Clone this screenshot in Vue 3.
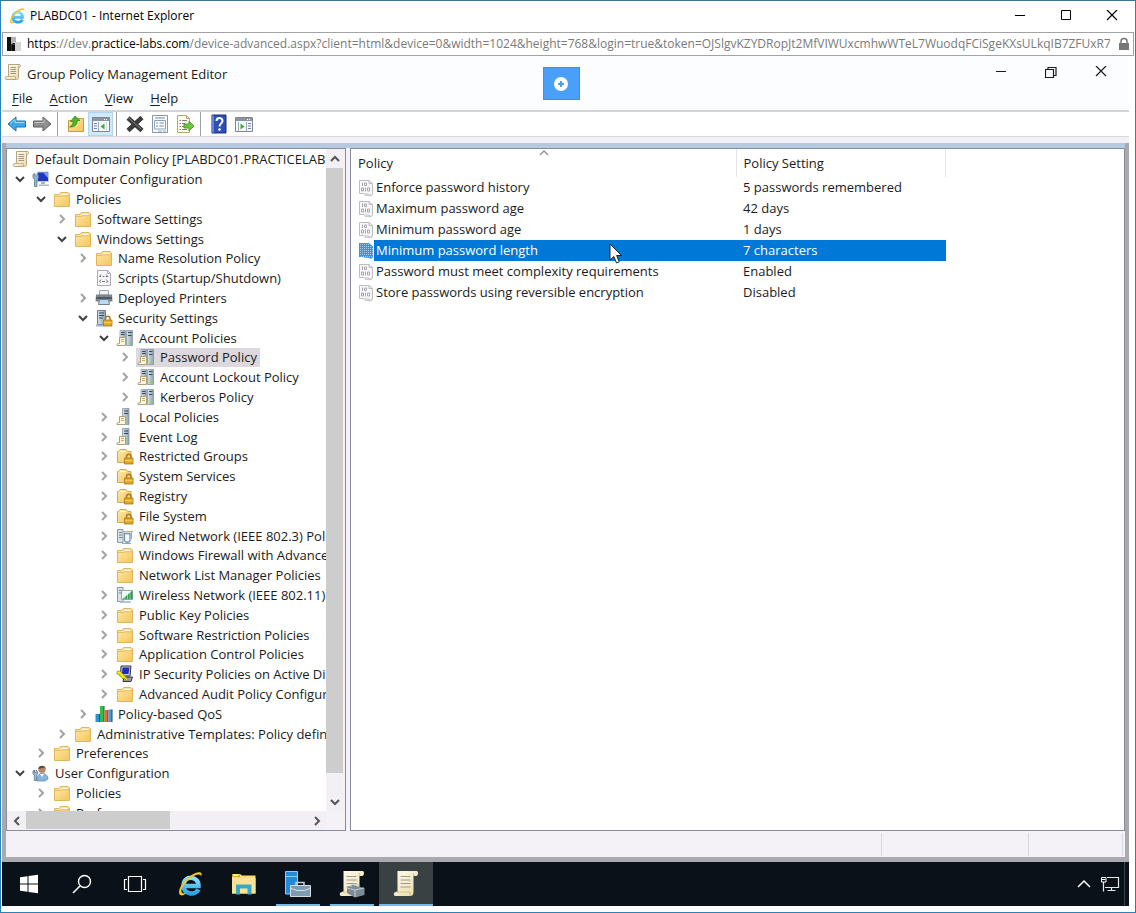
<script setup>
import { ref } from 'vue'

const tree = [
  { level: 0, arrow: '', icon: 'scroll', text: 'Default Domain Policy [PLABDC01.PRACTICELABS', root: true },
  { level: 0, arrow: 'open', icon: 'computer', text: 'Computer Configuration' },
  { level: 1, arrow: 'open', icon: 'folder', text: 'Policies' },
  { level: 2, arrow: 'closed', icon: 'folder', text: 'Software Settings' },
  { level: 2, arrow: 'open', icon: 'folder', text: 'Windows Settings' },
  { level: 3, arrow: 'closed', icon: 'folder', text: 'Name Resolution Policy' },
  { level: 3, arrow: '', icon: 'script', text: 'Scripts (Startup/Shutdown)' },
  { level: 3, arrow: 'closed', icon: 'printer', text: 'Deployed Printers' },
  { level: 3, arrow: 'open', icon: 'security', text: 'Security Settings' },
  { level: 4, arrow: 'open', icon: 'servers', text: 'Account Policies' },
  { level: 5, arrow: 'closed', icon: 'servers', text: 'Password Policy' },
  { level: 5, arrow: 'closed', icon: 'servers', text: 'Account Lockout Policy' },
  { level: 5, arrow: 'closed', icon: 'servers', text: 'Kerberos Policy' },
  { level: 4, arrow: 'closed', icon: 'server', text: 'Local Policies' },
  { level: 4, arrow: 'closed', icon: 'server', text: 'Event Log' },
  { level: 4, arrow: 'closed', icon: 'locked', text: 'Restricted Groups' },
  { level: 4, arrow: 'closed', icon: 'locked', text: 'System Services' },
  { level: 4, arrow: 'closed', icon: 'locked', text: 'Registry' },
  { level: 4, arrow: 'closed', icon: 'locked', text: 'File System' },
  { level: 4, arrow: 'closed', icon: 'wired', text: 'Wired Network (IEEE 802.3) Polic' },
  { level: 4, arrow: 'closed', icon: 'folder', text: 'Windows Firewall with Advanced' },
  { level: 4, arrow: '', icon: 'folder', text: 'Network List Manager Policies' },
  { level: 4, arrow: 'closed', icon: 'wireless', text: 'Wireless Network (IEEE 802.11) P' },
  { level: 4, arrow: 'closed', icon: 'folder', text: 'Public Key Policies' },
  { level: 4, arrow: 'closed', icon: 'folder', text: 'Software Restriction Policies' },
  { level: 4, arrow: 'closed', icon: 'folder', text: 'Application Control Policies' },
  { level: 4, arrow: 'closed', icon: 'ipsec', text: 'IP Security Policies on Active Dir' },
  { level: 4, arrow: 'closed', icon: 'folder', text: 'Advanced Audit Policy Configur' },
  { level: 3, arrow: 'closed', icon: 'qos', text: 'Policy-based QoS' },
  { level: 2, arrow: 'closed', icon: 'folder', text: 'Administrative Templates: Policy definit' },
  { level: 1, arrow: 'closed', icon: 'folder', text: 'Preferences' },
  { level: 0, arrow: 'open', icon: 'user', text: 'User Configuration' },
  { level: 1, arrow: 'closed', icon: 'folder', text: 'Policies' },
  { level: 1, arrow: 'closed', icon: 'folder', text: 'Preferences' },
]
const selectedNode = ref(10)

const policies = [
  ['Enforce password history', '5 passwords remembered'],
  ['Maximum password age', '42 days'],
  ['Minimum password age', '1 days'],
  ['Minimum password length', '7 characters'],
  ['Password must meet complexity requirements', 'Enabled'],
  ['Store passwords using reversible encryption', 'Disabled'],
]
const selectedPolicy = ref(3)

const menus = ['File', 'Action', 'View', 'Help']
const toolGroups = [
  [['back', 'Back'], ['forward', 'Forward']],
  [['up', 'Up one level'], ['panel', 'Show/Hide console tree', true]],
  [['delete', 'Delete'], ['props', 'Properties'], ['export', 'Export list']],
  [['help', 'Help'], ['action', 'Show/Hide action pane']],
]
const pinned = [['start', 'Start'], ['search', 'Search'], ['taskview', 'Task View']]
const apps = [
  { icon: 'ie', label: 'Internet Explorer' },
  { icon: 'explorer', label: 'File Explorer' },
  { icon: 'srvmgr', label: 'Server Manager', running: true },
  { icon: 'gpmc', label: 'Group Policy Management', running: true },
  { icon: 'bigscroll', label: 'Group Policy Management Editor', running: true, active: true },
]
</script>

<template>
  <div class="browser">
    <svg class="sprite" aria-hidden="true">
      <defs>
        <linearGradient id="gFolder" x1="0" y1="0" x2="1" y2="1">
          <stop offset="0" stop-color="#ffe9a6" /><stop offset="1" stop-color="#f3c55f" />
        </linearGradient>
        <linearGradient id="gServer" x1="0" y1="0" x2="1" y2="0">
          <stop offset="0" stop-color="#d6e2ea" /><stop offset="1" stop-color="#8fa2b0" />
        </linearGradient>
        <linearGradient id="gPaper" x1="0" y1="0" x2="1" y2="1">
          <stop offset="0" stop-color="#fffdf0" /><stop offset="1" stop-color="#ead9a6" />
        </linearGradient>
        <linearGradient id="gIe" x1="0" y1="0" x2="0" y2="1">
          <stop offset="0" stop-color="#8be0fb" /><stop offset="1" stop-color="#2aa4e6" />
        </linearGradient>
      </defs>
      <symbol id="i-folder" viewBox="0 0 18 18">
        <path d="M1.500 4.500H6L7.500 2.500H15L16.500 4V16.500H1.500Z" fill="url(#gFolder)" stroke="#dfb65c" />
        <path d="M8.500 4.500H14.500" stroke="#fff" stroke-width="1.500" />
        <path d="M2 6.500H7L8.500 5.800H16" fill="none" stroke="#e6bd62" />
      </symbol>
      <symbol id="i-scroll" viewBox="0 0 18 18">
        <path d="M4.500 1.500H16C17 2.500 16.500 5 14.500 4.500V14.500C14.500 16 13.500 16.500 12.500 16.500H2C1 15.500 1 13.500 2.500 13.500H4.500Z" fill="url(#gPaper)" stroke="#b3a583" />
        <path d="M14.500 4.500V2.500M2.500 13.500H11.500V16" fill="none" stroke="#c4b48a" />
        <path d="M6.500 4.500H12M6.500 6.500H12M6.500 8.500H12M6.500 10.500H12" stroke="#9c9788" />
      </symbol>
      <symbol id="i-computer" viewBox="0 0 18 18">
        <path d="M5.500 2H16.500V11.500H5.500Z" fill="#2134c4" stroke="#c0c7d8" />
        <path d="M11 2.500H16V8Z" fill="#7e98f2" />
        <path d="M9 12H13V14H9ZM7 14.500H17V16H7Z" fill="#a9b3c4" />
        <path d="M1 4.500L3 3.500V6L5 6V3.500L6.500 5V8L5 9.500V16.500H2.500V9.500L1 8Z" fill="#8fb6d4" stroke="#4a7194" stroke-width=".7" />
      </symbol>
      <symbol id="i-script" viewBox="0 0 18 18">
        <path d="M2.500 1.500H12.500L15.500 4.500V16.500H2.500Z" fill="#f8f8fa" stroke="#a9a9b2" />
        <path d="M12.500 1.500V4.500H15.500" fill="none" stroke="#a9a9b2" />
        <path d="M6 5.500L4.500 7.500H6M11 5.500L13 7.500H11M7.500 7.500H9.500M6 10.500L4.500 12.500L6 13.500M11 10.500L13 12.500L11 13.500M7 12.500H10" fill="none" stroke="#73737d" />
      </symbol>
      <symbol id="i-printer" viewBox="0 0 18 18">
        <path d="M4.500 1.500H13.500V6H4.500Z" fill="#f0f3f6" stroke="#9aa4ad" />
        <path d="M1 5.500H17L17.500 12.500H.500Z" fill="#7d858d" />
        <path d="M1 9H17" stroke="#454b52" stroke-width="1.500" />
        <path d="M4.500 10.500H13.500L14.500 15.500H3.500Z" fill="#b8d8f3" stroke="#6f8191" />
      </symbol>
      <symbol id="i-lock" viewBox="0 0 18 18">
        <path d="M10.500 11V9.500C10.500 6.500 15 6.500 15 9.500V11" fill="none" stroke="#a87d25" stroke-width="1.500" />
        <path d="M8.500 11H17V17H8.500Z" fill="#e0a526" stroke="#a87715" stroke-width=".8" />
        <path d="M9 13.500H16.500" stroke="#f3c957" stroke-width="1.500" />
      </symbol>
      <symbol id="i-security" viewBox="0 0 18 18">
        <path d="M2.500 1.500H10.500V15.500H2.500Z" fill="url(#gServer)" stroke="#6d7e8b" />
        <path d="M4 4H9M4 6.500H9M4 9H8" stroke="#32475b" />
        <path d="M1 15.500H10V17.500H1Z" fill="#9ab6cf" />
        <use href="#i-lock" />
      </symbol>
      <symbol id="i-locked" viewBox="0 0 18 18">
        <path d="M1.500 4.500H2.500L4 2.500H10L11.500 4.500H15V15.500H1.500Z" fill="url(#gFolder)" stroke="#d6a94a" />
        <path d="M4.500 4.500H9.500" stroke="#fff" />
        <use href="#i-lock" />
      </symbol>
      <symbol id="i-page" viewBox="0 0 18 18">
        <path d="M3.500 8.500H9.500V16.500H1C.500 15.500 1 14.500 3.500 14.500Z" fill="#fff9e2" stroke="#ab9f7d" />
        <path d="M5 10.500H8M5 12.500H8" stroke="#d3a84e" />
      </symbol>
      <symbol id="i-servers" viewBox="0 0 18 18">
        <path d="M4 1.500H9.500V13H4Z" fill="url(#gServer)" stroke="#8696a3" stroke-width=".7" />
        <path d="M10.500 1.500H16.500V16.500H10.500Z" fill="url(#gServer)" stroke="#7b8d9a" stroke-width=".7" />
        <path d="M5 3.500H8.500M5 5.500H8.500M12 3.500H15.500M12 6.500H15.500" stroke="#334d60" />
        <path d="M13 13H15.500V15H13Z" fill="#8bd15a" />
        <use href="#i-page" />
      </symbol>
      <symbol id="i-server" viewBox="0 0 18 18">
        <path d="M6.500 .500H13V16.500H6.500Z" fill="url(#gServer)" stroke="#7b8d9a" stroke-width=".7" />
        <path d="M8 3H12M8 5.500H12" stroke="#334d60" />
        <path d="M10.500 12.500H12V14.500H10.500Z" fill="#8bd15a" />
        <use href="#i-page" />
      </symbol>
      <symbol id="i-wired" viewBox="0 0 18 18">
        <path d="M1.500 2.500H7V15.500H1.500Z" fill="#dbe3ea" stroke="#8796a5" />
        <path d="M3 5.500H6M3 8H6M3 10.500H6" stroke="#6e8294" />
        <path d="M7 4.500H17M15.500 4.500V12" stroke="#bca973" />
        <path d="M8.500 6.500H14V13C14 16 8.500 16 8.500 13Z" fill="#fff" stroke="#6a92b8" stroke-width="1.300" />
        <path d="M6 16.500H15" stroke="#8fa9bf" />
      </symbol>
      <symbol id="i-wireless" viewBox="0 0 18 18">
        <path d="M1.500 1.500H7V15.500H1.500Z" fill="#dbe3ea" stroke="#8796a5" />
        <path d="M3 4.500H6M3 7H6" stroke="#6e8294" />
        <path d="M5.500 4.500H16.500V13.500H5.500Z" fill="#effaf0" stroke="#92a99c" />
        <path d="M6.500 13L16.500 4.500V13Z" fill="#2e9b57" />
        <path d="M9 5V13M11.500 5V13M14 5V13" stroke="#fff" stroke-width=".5" />
        <path d="M4 16H15" stroke="#9cb3c4" stroke-width="1.500" />
      </symbol>
      <symbol id="i-ipsec" viewBox="0 0 18 18">
        <path d="M5 1H15L14 11H4.500Z" fill="#c9cbd6" stroke="#33343d" />
        <path d="M6.500 2.500H13.500L12.500 9H6Z" fill="#1c2fb5" />
        <path d="M8 12H16.500L15 16.500H7Z" fill="#9b9ca6" stroke="#33343d" />
        <path d="M1 6.500L4 6L12 14.500L10.500 15.500L8 13L6.500 14L5.500 11.500L3.500 11L4 9.500L1 9Z" fill="#f7f000" stroke="#77731b" stroke-width=".6" />
      </symbol>
      <symbol id="i-qos" viewBox="0 0 18 18">
        <path d="M.500 9H4.500V17H.500Z" fill="#2694d8" /><path d="M4 9H5V17H4Z" fill="#104f86" />
        <path d="M5 1H9V17H5Z" fill="#35ba4e" /><path d="M8.500 1H9.500V17H8.500Z" fill="#16692a" />
        <path d="M9.500 5H13V17H9.500Z" fill="#e86a35" /><path d="M12.500 5H13.500V17H12.500Z" fill="#8f3317" />
        <path d="M13.500 4.500H17V17H13.500Z" fill="#4aa2dd" /><path d="M16.500 4.500H17.500V17H16.500Z" fill="#153e6e" />
      </symbol>
      <symbol id="i-user" viewBox="0 0 18 18">
        <path d="M5 17C5 11 7 9.500 10 9.500C14 9.500 16 12 16 15L13 17Z" fill="#85b5df" stroke="#5c86ad" stroke-width=".7" />
        <path d="M8 10L10 13L12 10Z" fill="#fff" />
        <circle cx="10" cy="5.500" r="3.600" fill="#b98763" />
        <path d="M6.400 5C6 .500 14 .500 13.600 5L12 3.500Z" fill="#5a4739" />
        <path d="M1 7L2.500 6V8.500H4V6L5.500 7.500V10L4.500 11V16.500H2.300V11L1 10Z" fill="#9fbdd5" stroke="#456b8c" stroke-width=".7" />
      </symbol>
      <symbol id="i-policy" viewBox="0 0 16 18">
        <path d="M1.500 1.500H11L14.500 4.500V15C14 16.500 12.500 16.500 11 15.500C9.500 14 7 16 5 14.500H1.500Z" fill="#f8f8fa" stroke="#bcbcc4" />
        <path d="M11 1.500V4.500H14.500M7 16.500C10 15.500 10.500 17.500 13.500 16.500" fill="none" stroke="#bcbcc4" />
        <path d="M4.500 3.500V7M6.500 4H8.500V6.500H6.500ZM3.500 9H5.500V12H3.500ZM7.500 8.500V12.500M9.500 9H11.500V12H9.500Z" fill="none" stroke="#a6a6b0" />
      </symbol>
      <symbol id="i-policysel" viewBox="0 0 16 18">
        <path d="M1 1H11L15 4.500V15C14 17 12.500 17 11 16C9.500 15 7 16.500 5 15H1Z" fill="#3d93dc" />
        <path d="M2 2.500H11M2 4.500H14M2 6.500H15M2 8.500H15M2 10.500H15M2 12.500H15M3 14.500H14" stroke="#a7cdee" stroke-dasharray="1 1" />
      </symbol>

      <symbol id="i-back" viewBox="0 0 20 20">
        <path d="M1 10L9 3V7H18.500V13H9V17Z" fill="#42a9e6" stroke="#1a72ad" stroke-linejoin="round" />
        <path d="M3 9.500L8 5.500V8.500H17.500" fill="none" stroke="#9edcfb" />
      </symbol>
      <symbol id="i-forward" viewBox="0 0 20 20">
        <path d="M19 10L11 3V7H1.500V13H11V17Z" fill="#909090" stroke="#5e5e5e" stroke-linejoin="round" />
        <path d="M2.500 8.500H12V5.500" fill="none" stroke="#c4c4c4" />
      </symbol>
      <symbol id="i-up" viewBox="0 0 20 20">
        <path d="M2.500 6.500H10L11.500 4.500H17.500V17.500H2.500Z" fill="url(#gFolder)" stroke="#c99c3c" />
        <path d="M3.500 13C5.500 12 7.500 10 7 7.500H4.500L9 2L14 6.500H11C11.500 11 8 13.500 3.500 13Z" fill="#4fb526" stroke="#2c8514" stroke-width=".7" />
      </symbol>
      <symbol id="i-panel" viewBox="0 0 20 20">
        <path d="M1.500 3.500H18.500V17.500H1.500Z" fill="#f7f8fb" stroke="#80858e" />
        <path d="M2 4H18V7H2Z" fill="#8c94a1" />
        <path d="M13 5.500H17" stroke="#fff" stroke-dasharray="1 1" />
        <path d="M7.500 8V17" stroke="#9ca4b0" />
        <path d="M3 9.500H6M3 12H6M3 14.500H6" stroke="#5f87c5" />
        <path d="M13.500 9.500V15.500L9.500 12.500Z" fill="#3cac39" />
        <path d="M15.500 8V17" stroke="#d5dae2" />
      </symbol>
      <symbol id="i-delete" viewBox="0 0 20 20">
        <path d="M3 4L17 16.500M17 3.500L3 16.500" stroke="#3c3c3c" stroke-width="4.500" />
        <path d="M3 3.500L16 15" stroke="#818181" stroke-width="1" />
      </symbol>
      <symbol id="i-props" viewBox="0 0 20 20">
        <path d="M2.500 1.500H17.500V18.500H2.500Z" fill="#f7f9fb" stroke="#8f969d" />
        <path d="M4.500 6.500H15.500V15H4.500Z" fill="#fff" stroke="#86a3bd" />
        <path d="M5 4H15" stroke="#a4afba" stroke-width="1.500" />
        <path d="M6 9H8M9.500 9H14M6 12H8M9.500 12H14" stroke="#6c8ba8" />
        <path d="M8 17H12M13 17H16" stroke="#89b9d7" />
      </symbol>
      <symbol id="i-export" viewBox="0 0 20 20">
        <path d="M2.500 1.500H11.500L14.500 4.500V18.500H2.500Z" fill="#fffbea" stroke="#b5a77d" />
        <path d="M11.500 1.500V4.500H14.500" fill="none" stroke="#b5a77d" />
        <path d="M4.500 6.500H6M7 6.500H12M4.500 9.500H6M7 9.500H10M4.500 12.500H6M7 12.500H10M4.500 15.500H6M7 15.500H12" stroke="#7b7a85" />
        <path d="M9 10H14V7L19 12L14 17V14H9Z" fill="#69c93c" stroke="#3c9420" stroke-width=".8" />
      </symbol>
      <symbol id="i-help" viewBox="0 0 20 20">
        <path d="M3 1H17V19H3Z" fill="#2e4fb7" stroke="#1c3077" />
        <path d="M4 1.500V18.500" stroke="#7a96e4" stroke-width="1.500" />
        <path d="M7.500 7C7.500 3 13.500 3.200 13.500 6.700C13.500 9.300 10.500 9.500 10.500 12.500" fill="none" stroke="#fff" stroke-width="2" />
        <circle cx="10.500" cy="15.500" r="1.300" fill="#fff" />
      </symbol>
      <symbol id="i-action" viewBox="0 0 20 20">
        <path d="M1.500 3.500H18.500V17.500H1.500Z" fill="#f7f8fb" stroke="#80858e" />
        <path d="M2 4H18V7H2Z" fill="#8c94a1" />
        <path d="M13 5.500H17" stroke="#fff" stroke-dasharray="1 1" />
        <path d="M12.500 8V17M4.500 8V17" stroke="#9ca4b0" />
        <path d="M14 9.500H17M14 12H17M14 14.500H17" stroke="#5f87c5" />
        <path d="M6.500 9.500V15.500L10.500 12.500Z" fill="#3cac39" />
      </symbol>

      <symbol id="i-start" viewBox="0 0 28 28">
        <path d="M5 7.300L12.500 6.200V13.500H5ZM13.500 6L23 4.700V13.500H13.500ZM5 14.500H12.500V21.800L5 20.700ZM13.500 14.500H23V23.300L13.500 22Z" fill="#fff" />
      </symbol>
      <symbol id="i-search" viewBox="0 0 28 28">
        <circle cx="16.500" cy="11.500" r="6" fill="none" stroke="#fff" stroke-width="1.400" />
        <path d="M12.200 15.800L5 23" stroke="#fff" stroke-width="1.600" />
      </symbol>
      <symbol id="i-taskview" viewBox="0 0 28 28">
        <path d="M7.500 6.500H20.500V21.500H7.500ZM6 9.500H3.500V19.500H6M22 9.500H24.500V19.500H22" fill="none" stroke="#fff" stroke-width="1.200" />
      </symbol>
      <symbol id="i-ie" viewBox="0 0 28 28">
        <path d="M8.500 16H22.500C23 5.500 7.500 5 7.500 15.500C7.500 24.500 19 26 22.500 19.500" fill="none" stroke="url(#gIe)" stroke-width="4.500" />
        <path d="M5.500 25.500C.500 24.500 3.500 15.500 10.500 9C17 2.500 24.500 .500 25.500 3.500C25.800 4.500 25.500 5.500 25 6.500C25.200 3.500 20 3.800 14 8.500C7 14 3.500 21.500 6.500 23C8 23.500 9.500 23 10.500 22.700C8.500 24.300 7 25.800 5.500 25.500Z" fill="#f1c628" />
      </symbol>
      <symbol id="i-explorer" viewBox="0 0 28 28">
        <path d="M2 4.500L3 4H10L12 5.500H25.500V23.500H2Z" fill="#fbdc7c" />
        <path d="M2 5H10V7H2Z" fill="#d8a42c" /><path d="M3.500 5H8V6H3.500Z" fill="#fff" />
        <path d="M2 8H25.500V23.500H2Z" fill="#fbe299" />
        <path d="M6 14.500H21.500V24.500H17.500V18.500H10V24.500H6Z" fill="#3aa9c4" />
      </symbol>
      <symbol id="i-srvmgr" viewBox="0 0 28 28">
        <path d="M1.500 1.500H13.500V24H1.500Z" fill="#2389dc" stroke="#8fcdf7" />
        <path d="M1.500 6.500H13.500" stroke="#8fcdf7" />
        <path d="M12 15V12.500H20V15" fill="none" stroke="#c4d2dd" stroke-width="1.500" />
        <path d="M6.500 15.500H26.500V26.500H6.500Z" fill="#7e9bb0" stroke="#d2dfe9" />
        <path d="M7 18.500L13 20.500H20L26 18.500" fill="none" stroke="#d2dfe9" />
      </symbol>
      <symbol id="i-bigscroll" viewBox="0 0 28 28">
        <path d="M5.500 1H25C26.500 2 26.500 5 24.500 6H21.500V22C21.500 25 20 26 18 26H3C1 25 1.500 22 4 22H5.500Z" fill="url(#gPaper)" />
        <path d="M4 22H18V25.500M21.500 6V3" fill="none" stroke="#d8c88c" stroke-width="1.200" />
        <path d="M8.500 6.500H18.500M8.500 10H18.500M8.500 13.500H18.500M8.500 17H18.500" stroke="#9d9c95" />
      </symbol>
      <symbol id="i-gpmc" viewBox="0 0 28 28">
        <use href="#i-bigscroll" />
        <path d="M9 17L15 15L26.500 18V25L17 27.500L9 23Z" fill="#7c8b96" />
        <path d="M9 18L17 20L26 18M17 20V27M13 17V14.500L20 14V17" fill="none" stroke="#c4cdd4" />
      </symbol>
      <symbol id="i-min" viewBox="0 0 12 12"><path d="M1 5.500H11" stroke="currentColor" fill="none" /></symbol>
      <symbol id="i-max" viewBox="0 0 12 12"><path d="M1.500 .500H10.500V9.500H1.500Z" stroke="currentColor" fill="none" /></symbol>
      <symbol id="i-restore" viewBox="0 0 12 12"><path d="M.500 3.500H8.500V11.500H.500ZM3 3.500V1.500H11V9.500H8.500" stroke="currentColor" stroke-width="1.200" fill="none" /></symbol>
      <symbol id="i-close" viewBox="0 0 12 12"><path d="M1 0L11 10M11 0L1 10" stroke="currentColor" stroke-width="1.200" fill="none" /></symbol>
      <symbol id="i-chev" viewBox="0 0 12 12"><path d="M2 4L6 8L10 4" stroke="currentColor" stroke-width="2" fill="none" /></symbol>
      <symbol id="i-thin" viewBox="0 0 12 12"><path d="M2 4L6 8L10 4" stroke="currentColor" stroke-width="1.300" fill="none" /></symbol>
    </svg>

    <header class="titlebar">
      <svg class="ico18"><use href="#i-ie" /></svg>
      <h1>PLABDC01 - Internet Explorer</h1>
      <div class="winbtns">
        <button aria-label="Minimize"><svg><use href="#i-min" /></svg></button>
        <button aria-label="Maximize"><svg><use href="#i-max" /></svg></button>
        <button aria-label="Close"><svg><use href="#i-close" /></svg></button>
      </div>
    </header>

    <div class="address">
      <svg class="site" viewBox="0 0 16 16">
        <path d="M1 1H5V15H1Z" fill="#111" /><path d="M5 7H9V15H5Z" fill="#333" />
        <path d="M5 1H10V6L5 8Z" fill="#b4b4b4" /><path d="M9 6H15V15H9Z" fill="#d4d4d4" /><path d="M6 9H9V15H6Z" fill="#0c0c0c" />
      </svg>
      <div class="url" role="textbox" aria-label="Address" tabindex="0"><b>https</b>://dev.<b>practice-labs.com</b>/device-advanced.aspx?client=html&amp;device=0&amp;width=1024&amp;height=768&amp;login=true&amp;token=OJSlgvKZYDRopJt2MfVIWUxcmhwWTeL7WuodqFCiSgeKXsULkqIB7ZFUxR7ZYOgV</div>
      <svg class="padlock" viewBox="0 0 12 14"><path d="M3 6V4C3 .500 9 .500 9 4V6" fill="none" stroke="#777" stroke-width="1.500" /><path d="M1 6H11V13H1Z" fill="#777" /></svg>
    </div>

    <main class="remote">
      <header class="apptitle">
        <svg class="ico18"><use href="#i-scroll" /></svg>
        <h2>Group Policy Management Editor</h2>
        <div class="winbtns inner">
          <button aria-label="Minimize"><svg><use href="#i-min" /></svg></button>
          <button aria-label="Restore"><svg><use href="#i-restore" /></svg></button>
          <button aria-label="Close"><svg><use href="#i-close" /></svg></button>
        </div>
      </header>
      <nav class="menus">
        <button v-for="m in menus" :key="m"><u>{{ m[0] }}</u>{{ m.slice(1) }}</button>
      </nav>
      <button class="plus" aria-label="Open device menu">
        <svg viewBox="0 0 14 14"><circle cx="7" cy="7" r="7" fill="#fff" /><path d="M7 4V10M4 7H10" stroke="#4a9ff8" stroke-width="2.200" /></svg>
      </button>

      <div class="toolbar">
        <div v-for="(g, gi) in toolGroups" :key="gi" class="group">
          <button v-for="t in g" :key="t[0]" :aria-label="t[1]" :class="{ on: t[2] }"><svg><use :href="'#i-' + t[0]" /></svg></button>
        </div>
      </div>

      <div class="frame">
        <div class="panes">
          <section class="treepane">
            <ul class="tree" role="tree">
              <li v-for="(n, i) in tree" :key="i" role="treeitem" :aria-selected="i === selectedNode" :class="{ root: n.root }" :style="{ paddingLeft: n.level * 21 + 'px' }">
                <button v-if="!n.root" class="arrow" :class="n.arrow" :aria-label="n.arrow ? 'Toggle ' + n.text : n.text" :disabled="!n.arrow">
                  <svg v-if="n.arrow"><use href="#i-chev" /></svg>
                </button>
                <button class="node" :class="{ selected: i === selectedNode }" @click="selectedNode = i">
                  <svg class="ico18"><use :href="'#i-' + n.icon" /></svg><span>{{ n.text }}</span>
                </button>
              </li>
            </ul>
            <div class="vbar">
              <button class="up" aria-label="Scroll up"><svg><use href="#i-chev" /></svg></button>
              <div class="track"><div class="thumb"></div></div>
              <button aria-label="Scroll down"><svg><use href="#i-chev" /></svg></button>
            </div>
            <div class="hbar">
              <button class="left" aria-label="Scroll left"><svg><use href="#i-chev" /></svg></button>
              <div class="track"><div class="thumb"></div></div>
              <button class="right" aria-label="Scroll right"><svg><use href="#i-chev" /></svg></button>
            </div>
          </section>
          <section class="listpane">
            <table>
              <thead>
                <tr>
                  <th>Policy<svg class="sort"><use href="#i-thin" /></svg></th>
                  <th>Policy Setting</th>
                </tr>
              </thead>
              <tbody>
                <tr v-for="(p, i) in policies" :key="p[0]" :class="{ sel: i === selectedPolicy }" @click="selectedPolicy = i">
                  <td><div class="cell"><svg class="pol"><use :href="i === selectedPolicy ? '#i-policysel' : '#i-policy'" /></svg><span>{{ p[0] }}</span></div></td>
                  <td><div class="cell">{{ p[1] }}</div></td>
                </tr>
              </tbody>
            </table>
            <svg class="cursor" viewBox="0 0 14 22"><path d="M1 1V17L4.800 13.500L7.500 20L10.300 18.800L7.600 12.500H12.500Z" fill="#fff" stroke="#222" /></svg>
          </section>
        </div>
        <footer class="status"><span></span><span></span><span></span></footer>
      </div>

      <nav class="taskbar">
        <button v-for="p in pinned" :key="p[0]" class="pin" :aria-label="p[1]"><svg><use :href="'#i-' + p[0]" /></svg></button>
        <div class="apps">
          <button v-for="a in apps" :key="a.icon" :aria-label="a.label" :class="{ running: a.running, active: a.active }"><svg><use :href="'#i-' + a.icon" /></svg></button>
        </div>
        <div class="tray">
          <button aria-label="Show hidden icons"><svg class="caret" viewBox="0 0 16 16"><path d="M2 11L8 5L14 11" fill="none" stroke="#fff" stroke-width="1.500" /></svg></button>
          <button aria-label="Network">
            <svg class="net" viewBox="0 0 20 18"><path d="M7 2.500H18.500V12.500H5M11.500 12.500V15.500M7.500 15.500H15.500M3.500 7V16.500" fill="none" stroke="#e4e8ea" stroke-width="1.200" /><path d="M1.500 2.500H6V7H1.500Z" fill="#0a1118" stroke="#fff" /><path d="M2 4.500H5.500" stroke="#fff" /></svg>
          </button>
        </div>
      </nav>
    </main>
  </div>
</template>

<style>
body { background: #fff; }
</style>

<style scoped>
* { box-sizing: border-box; }
.browser {
  height: 100vh; min-height: 480px; display: flex; flex-direction: column; overflow: hidden;
  border: 1px solid #2a83b8; border-top-color: #3f7592; background: #fff; color: #1b1b1b;
  font: 12px/18px "Open Sans", "Noto Sans", sans-serif;
}
.sprite { position: absolute; width: 0; height: 0; }
button { border: 0; padding: 0; margin: 0; background: none; font: inherit; color: inherit; display: flex; align-items: center; justify-content: center; flex: none; }
svg { display: block; flex: none; }
h1, h2 { margin: 0; font: inherit; white-space: nowrap; }
.ico18 { width: 18px; height: 18px; }
.titlebar { height: 31px; display: flex; align-items: center; gap: 4px; padding: 0 0 2px 7px; flex: none; color: #000; }
.winbtns { margin-left: auto; display: flex; align-self: stretch; }
.winbtns button { width: 46px; }
.winbtns svg { width: 12px; height: 12px; }
.winbtns.inner button { width: 50px; }
.winbtns.inner { padding: 0 3px 0 0; }
.address { height: 24px; margin: 0 1px; border: 1px solid #a3a3a3; display: flex; align-items: center; gap: 5px; padding: 0 3px; flex: none; }
.site { width: 16px; height: 16px; }
.url { flex: 1; min-width: 0; overflow: hidden; white-space: nowrap; color: #7a7a7a; }
.url b { font-weight: 400; color: #000; }
.padlock { width: 12px; height: 14px; margin-left: 3px; }
.remote { position: relative; flex: 1; min-height: 0; margin: 0 6px 6px 1px; display: flex; flex-direction: column; }
.apptitle { height: 32px; padding: 0 0 0 2px; display: flex; align-items: center; gap: 5px; flex: none; background: #fbfdfe; font-size: 13px; }
.apptitle h2 { padding-top: 4px; }
.menus { height: 24px; padding: 0 0 2px 2px; display: flex; flex: none; background: #fbfdfe; border-bottom: 2px solid #d2d5d8; font-size: 13px; }
.menus button { padding: 0 8px; margin-right: 1px; }
.menus u { text-underline-offset: 2px; }
.plus { position: absolute; top: 11px; left: calc(50% - 23px); width: 37px; height: 33px; background: #4a9ff8; border: 1px solid #3f8fe4; }
.plus svg { width: 14px; height: 14px; }
.toolbar { height: 25px; padding-left: 2px; display: flex; flex: none; border-bottom: 1px solid #d9d8df; }
.group { display: flex; }
.group + .group { margin-left: 3px; border-left: 1px solid #a0a0a0; padding-left: 5px; }
.toolbar button { width: 25px; height: 24px; }
.toolbar svg { width: 20px; height: 20px; }
.toolbar .on { background: #cfe8fb; border: 1px solid #b0d5f0; }
.frame { flex: 1; min-height: 0; display: flex; flex-direction: column; box-shadow: 0 -6px #f3f1f6; margin-top: 6px; border: solid #aaa9af; border-width: 0 4px 5px; background: #f4f2f6; }
.panes { flex: 1; min-height: 0; display: flex; gap: 4px; border-top: 5px solid #b5c9e3; }
.treepane { width: 340px; flex: none; display: grid; grid-template: minmax(0, 1fr) 18px / minmax(0, 1fr) 17px; border: 1px solid #878c9a; padding: 0 2px 1px 0; }
.tree { margin: 0; padding: 0 0 0 4px; list-style: none; overflow: hidden; background: #fff; font-size: 13px; }
.tree li { height: 20px; display: flex; align-items: center; }
.tree li:nth-child(5n) { height: 19px; }
.arrow { width: 17px; height: 18px; margin-right: 3px; color: #404040; }
.arrow svg { width: 12px; height: 12px; }
.arrow.closed { color: #a3a3a3; }
.arrow.closed svg { transform: rotate(-90deg); }
.node { gap: 5px; padding: 0 3px 0 1px; height: 19px; white-space: nowrap; }
.node.selected { background: #dcd8de; }
.vbar { display: flex; flex-direction: column; background: #f2f0f4; color: #55555a; }
.vbar button, .hbar button { width: 17px; height: 19px; }
.vbar svg, .hbar svg { width: 12px; height: 12px; }
.vbar .up svg { transform: rotate(180deg); }
.track { flex: 1; display: flex; }
.vbar .track { flex-direction: column; }
.vbar .thumb { height: 97%; background: #cdcdcd; }
.hbar { display: flex; padding-right: 1px; background: #f2f0f4; color: #55555a; }
.hbar .thumb { width: 51%; background: #cdcdcd; }
.hbar .left { width: 19px; }
.left svg { transform: rotate(90deg); }
.right svg { transform: rotate(-90deg); }
.listpane { position: relative; flex: 1; min-width: 0; background: #fff; border: 1px solid #878c9a; font-size: 13px; }
table { border-collapse: collapse; table-layout: fixed; width: 595px; }
th { position: relative; height: 28px; padding: 0 7px; text-align: left; font-weight: 400; border-right: 1px solid #e4e4e8; }
th:first-child { width: 385px; }
.sort { position: absolute; left: calc(50% - 5px); top: -2px; width: 12px; height: 12px; transform: rotate(180deg); color: #909090; }
td { height: 21px; padding: 0 7px; white-space: nowrap; }
td:first-child { padding-right: 0; }
.cell { display: flex; align-items: stretch; height: 21px; line-height: 20px; }
.cell span { flex: 1; padding-left: 2px; }
.pol { width: 16px; height: 18px; align-self: center; }
.sel { color: #fff; }
.sel td:last-child, .sel span { background: #0078d7; }
.cursor { position: absolute; left: 258px; top: 94px; width: 14px; height: 22px; }
.status { height: 26px; display: grid; grid-template-columns: minmax(0, 1fr) 147px 94px; padding: 2px 2px 1px 0; flex: none; }
.status span { border-right: 1px solid #dad8de; }
.taskbar { height: 44px; flex: none; display: flex; background: #0a1118; }
.taskbar svg { width: 28px; height: 28px; }
.pin { width: 53px; }
.apps { display: flex; margin-left: 2px; }
.apps button { width: 54px; position: relative; }
.apps .active { background: #3a4142; }
.apps .running::after { content: ""; position: absolute; left: 5px; right: 5px; bottom: 0; height: 2px; background: #76b9ed; }
.apps .active::after { left: 0; right: 0; }
.tray { margin-left: auto; margin-right: 4px; display: flex; gap: 8px; padding-right: 4px; border-right: 1px solid #3b434a; }
.taskbar .caret { width: 16px; height: 16px; }
.taskbar .net { width: 20px; height: 18px; }
</style>
